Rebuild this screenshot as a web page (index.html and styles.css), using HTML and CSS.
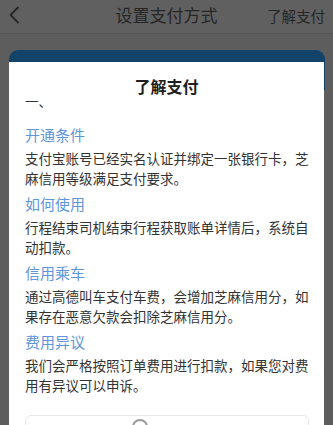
FILE: index.html
```html
<!DOCTYPE html>
<html lang="zh-CN">
<head>
<meta charset="utf-8">
<link rel="stylesheet" href="styles.css">
</head>
<body>
<div class="page">
  <header class="nav">
    <span class="back"><svg width="12" height="18" viewBox="0 0 12 18"><path d="M10 1.5 L2.5 9 L10 16.5" fill="none" stroke="#262626" stroke-width="1.8" stroke-linecap="round" stroke-linejoin="round"/></svg></span>
    <span class="nav-title">设置支付方式</span>
    <span class="nav-right">了解支付</span>
  </header>
  <div class="bg-content">
    <div class="card"></div>
  </div>
  <div class="modal">
    <div class="modal-title">了解支付</div>
    <div class="modal-body">
      <div class="scroll">
        <p class="text lead">一、</p>
        <section class="sec">
          <h3 class="sec-title">开通条件</h3>
          <p class="text">支付宝账号已经实名认证并绑定一张银行卡，芝<br>麻信用等级满足支付要求。</p>
        </section>
        <section class="sec">
          <h3 class="sec-title">如何使用</h3>
          <p class="text">行程结束司机结束行程获取账单详情后，系统自<br>动扣款。</p>
        </section>
        <section class="sec">
          <h3 class="sec-title">信用乘车</h3>
          <p class="text">通过高德叫车支付车费，会增加芝麻信用分，如<br>果存在恶意欠款会扣除芝麻信用分。</p>
        </section>
        <section class="sec">
          <h3 class="sec-title">费用异议</h3>
          <p class="text">我们会严格按照订单费用进行扣款，如果您对费<br>用有异议可以申诉。</p>
        </section>
        <div class="bottom-box"><span class="dot"></span></div>
      </div>
    </div>
  </div>
</div>
</body>
</html>
```
FILE: styles.css
```css
* { box-sizing: border-box; }
html, body { margin: 0; padding: 0; }
body {
  width: 333px;
  height: 425px;
  overflow: hidden;
  background: #5d5d5d;
  font-family: "Noto Sans CJK SC", "Noto Sans", sans-serif;
}
.page { position: relative; width: 333px; height: 425px; overflow: hidden; }
.nav {
  height: 34px;
  background: #606060;
  border-bottom: 1px solid #575757;
  display: flex;
  align-items: center;
  position: relative;
  padding: 0 8px 2px 8px;
}
.back { display: flex; width: 12px; height: 18px; margin-top: -2px; }
.nav-title {
  position: absolute;
  left: 0; right: 0;
  text-align: center;
  font-size: 17px;
  color: #262626;
  line-height: 30px;
  top: 0;
  pointer-events: none;
}
.nav-right {
  margin-left: auto;
  font-size: 14.5px;
  color: #262626;
  line-height: 30px;
}
.bg-content { padding: 16px 8px 0 9px; }
.card {
  height: 40px;
  background: #14436a;
  border-radius: 9px 9px 0 0;
}
.modal {
  position: absolute;
  left: 9px;
  top: 62px;
  width: 315px;
  height: 380px;
  background: #fff;
  border-radius: 2px 2px 0 0;
  display: flex;
  flex-direction: column;
}
.modal-title {
  height: 35px;
  flex: none;
  text-align: center;
  font-size: 16px;
  font-weight: 700;
  color: #1f1f1f;
  line-height: 49px;
  background: #fff;
  position: relative;
  z-index: 1;
}
.modal-body { flex: 1; overflow: hidden; }
.scroll { margin-top: -6px; padding: 0 12px 0 16px; }
.text {
  margin: 0;
  font-size: 13.5px;
  line-height: 20px;
  color: #333;
  white-space: nowrap;
  text-spacing-trim: space-all;
}
.lead { margin-bottom: 11px; }
.sec { margin-bottom: 3px; }
.sec-title {
  margin: 0;
  font-size: 15px;
  font-weight: 400;
  line-height: 26px;
  color: #5e96da;
}
.bottom-box {
  margin-top: 20px;
  margin-right: 3px;
  height: 40px;
  border: 1px solid #e8e8e8;
  border-radius: 6px;
  position: relative;
}
.dot {
  position: absolute;
  left: 106px;
  top: 3px;
  width: 16px;
  height: 16px;
  border-radius: 50%;
  border: 2px solid #9a9a9a;
}
```
